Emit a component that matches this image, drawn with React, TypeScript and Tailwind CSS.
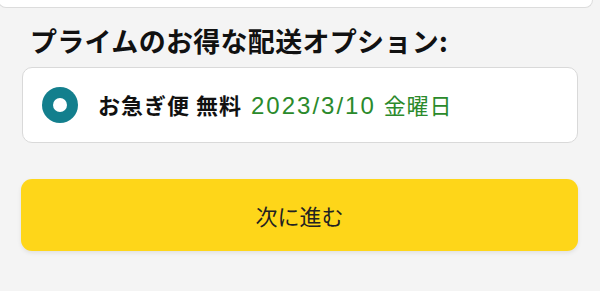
export default function App() {
  return (
    <div className="h-[291px] w-[600px] overflow-hidden bg-[#f4f4f4] font-['Noto_Sans_CJK_JP','Noto_Sans',sans-serif]">
      {/* tail of previous card */}
      <div className="-ml-[2px] h-[8px] w-[595px] rounded-b-[12px] border border-t-0 border-[#dcdcdc] bg-white" />

      <h2 className="mt-[16px] pl-[30px] text-[27px] font-bold leading-[34px] tracking-[0.3px] text-[#111]">
        プライムのお得な配送オプション:
      </h2>

      <div className="mx-[22px] mt-[9px] flex h-[76px] items-center rounded-[10px] border border-[#d9d9d9] bg-white pl-[19px]">
        <div className="flex h-[36px] w-[36px] items-center justify-center rounded-full bg-[#137f8d]">
          <div className="h-[14px] w-[14px] rounded-full bg-white" />
        </div>
        <p className="ml-[20px] flex items-baseline text-[22px] leading-none text-[#111]">
          <span className="font-bold tracking-[1px]">お急ぎ便 無料</span>
          <span className="ml-[9px] font-['Liberation_Sans','Noto_Sans_CJK_JP',sans-serif] text-[24px] tracking-[2px] text-[#2b8a2b]">
            2023/3/10
          </span>
          <span className="ml-[8px] text-[22px] tracking-[0.8px] text-[#2b8a2b]">金曜日</span>
        </p>
      </div>

      <button className="mx-[21px] mt-[36px] flex h-[72px] w-[557px] items-center justify-center rounded-[11px] bg-[#fed619] text-[22px] text-[#222] shadow-[0_2px_4px_rgba(0,0,0,0.08)]">
        次に進む
      </button>
    </div>
  )
}
